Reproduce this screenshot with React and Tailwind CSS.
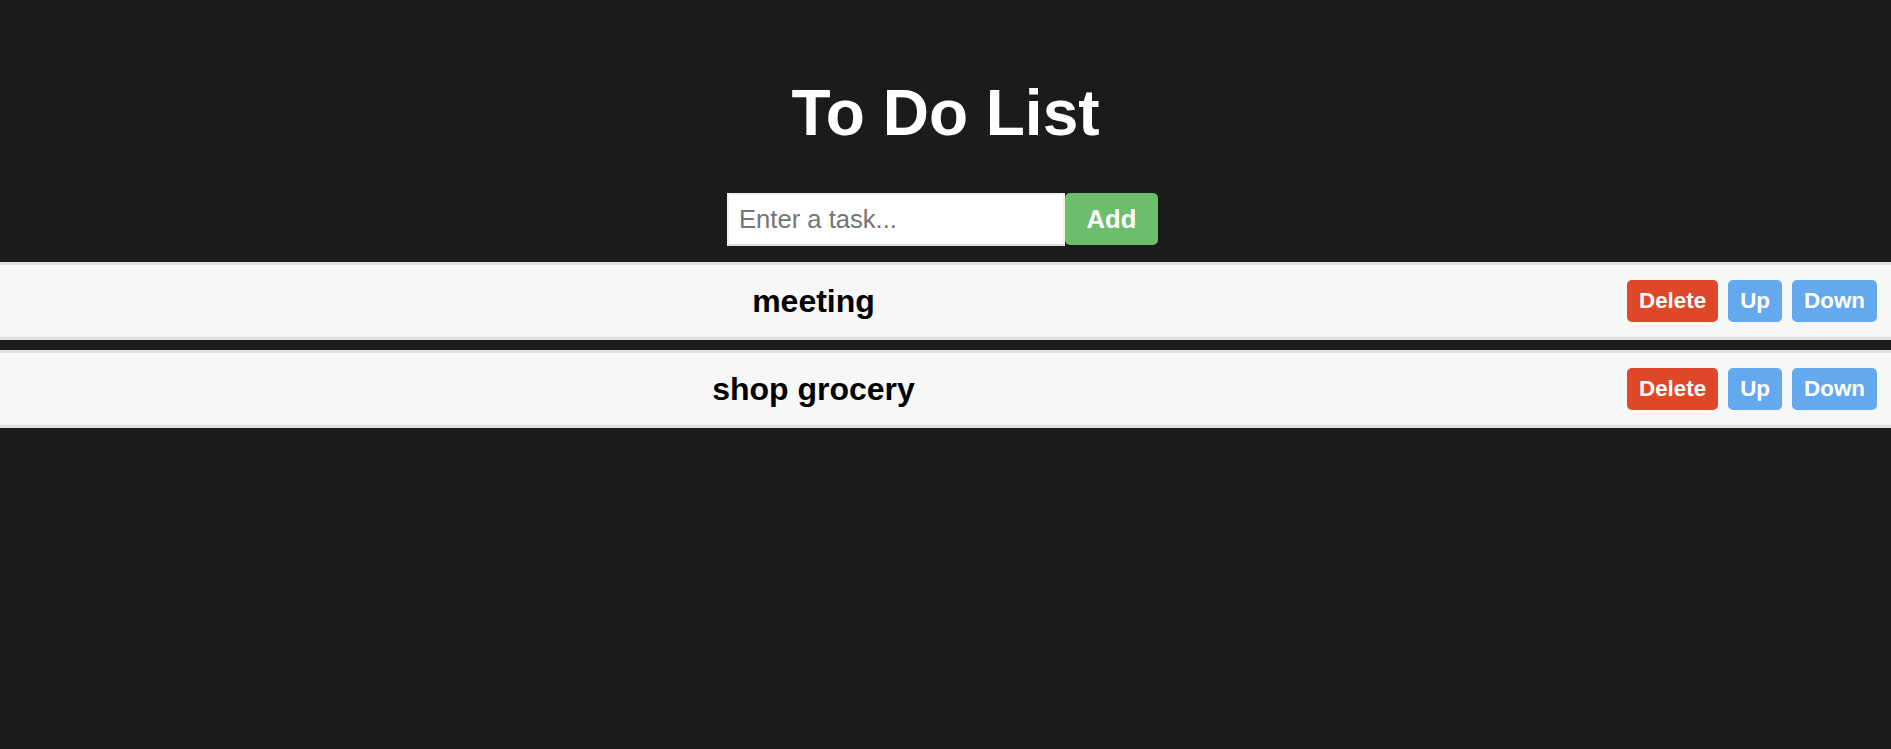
import { useState } from 'react';

export default function App() {
  const [tasks, setTasks] = useState(['meeting', 'shop grocery']);
  const [text, setText] = useState('');

  const addTask = () => {
    if (!text.trim()) return;
    setTasks([...tasks, text.trim()]);
    setText('');
  };

  const move = (i, dir) => {
    const j = i + dir;
    if (j < 0 || j >= tasks.length) return;
    const next = [...tasks];
    [next[i], next[j]] = [next[j], next[i]];
    setTasks(next);
  };

  return (
    <div className="min-h-screen bg-[#1b1b1b] pt-[76px] font-['Liberation_Sans',Arial,sans-serif]">
      <h1 className="text-center text-[64px] leading-[74px] font-bold text-white mb-[43px]">To Do List</h1>
      <div className="flex justify-center pr-[6px]">
        <input
          value={text}
          onChange={e => setText(e.target.value)}
          placeholder="Enter a task..."
          className="w-[338px] h-[53px] bg-white border-2 border-[#f0f0f0] border-b-[#dcdcdc] px-[10px] text-[25.6px] text-black placeholder:text-[#757575] outline-none"
        />
        <button onClick={addTask} className="w-[93px] h-[52px] bg-[#6cbe6a] text-white text-[25.6px] font-bold rounded-[5px]">Add</button>
      </div>
      <ol className="mt-[16px]">
        {tasks.map((task, i) => (
          <li key={task + i} className="flex items-center h-[78px] mb-[10px] bg-[#f7f7f7] border-y-[3px] border-[#e0e0e0]">
            <span className="flex-1 text-center text-[32px] leading-[37px] font-bold text-black">{task}</span>
            <div className="flex gap-[10px] pr-[14px]">
              <button onClick={() => setTasks(tasks.filter((_, k) => k !== i))} className="px-[12px] py-[8px] bg-[#de4828] text-white text-[22.4px] leading-[26px] font-bold rounded-[5px]">Delete</button>
              <button onClick={() => move(i, -1)} className="px-[12px] py-[8px] bg-[#64a8ee] text-white text-[22.4px] leading-[26px] font-bold rounded-[5px]">Up</button>
              <button onClick={() => move(i, 1)} className="px-[12px] py-[8px] bg-[#64a8ee] text-white text-[22.4px] leading-[26px] font-bold rounded-[5px]">Down</button>
            </div>
          </li>
        ))}
      </ol>
    </div>
  );
}
